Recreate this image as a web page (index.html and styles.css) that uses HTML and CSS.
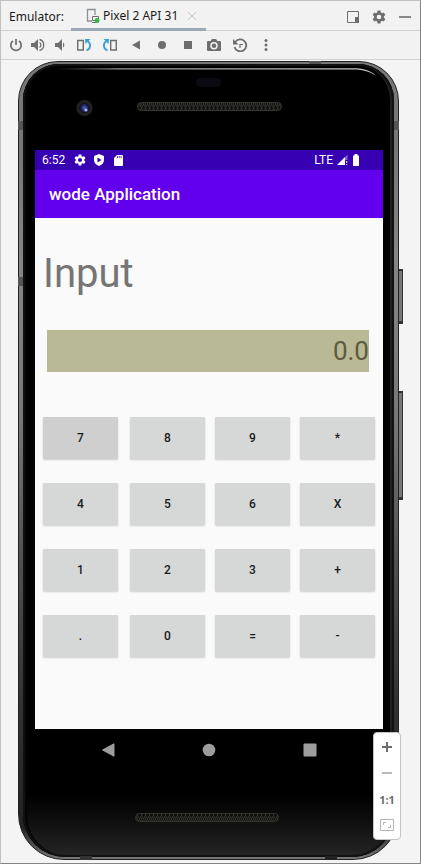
FILE: index.html
```html
<!DOCTYPE html>
<html lang="en">
<head>
<meta charset="utf-8">
<title>Emulator</title>
<meta name="viewport" content="width=device-width">
<link rel="stylesheet" href="styles.css">
</head>
<body>
<header class="titlebar">
  <span class="caption">Emulator:</span>
  <div class="tab">
    <svg width="14" height="16" viewBox="0 0 14 16"><path d="M6 13H1.5V1.5H9V7" fill="none" stroke="#8b9096" stroke-width="1.3"/><path d="M6.5 8.5h6v4h-6zM6 14.5h5" fill="#f2f2f2" stroke="#6e6e6e"/><circle cx="11" cy="12.500" r="2.500" fill="#39b54a"/></svg>
    <span>Pixel 2 API 31</span>
    <button class="icon close" aria-label="Close tab"><svg width="10" height="10" viewBox="0 0 10 10"><path d="M1 1l8 8M9 1L1 9" stroke="#c3c6c8" fill="none"/></svg></button>
  </div>
  <div class="window-actions">
    <button class="icon" aria-label="View mode"><svg width="14" height="14" viewBox="0 0 14 14"><path d="M1.500 1.500h11v11h-11z" fill="none" stroke="#6e6e6e"/><path d="M9 7h4v6H9z" fill="#6e6e6e"/></svg></button>
    <button class="icon" aria-label="Settings"><svg width="14" height="14" viewBox="0 0 24 24"><use href="#gear"/></svg></button>
    <button class="icon" aria-label="Hide"><svg width="12" height="14" viewBox="0 0 12 14"><path d="M0 7h12" stroke="#6e6e6e" stroke-width="1.600"/></svg></button>
  </div>
</header>

<nav class="toolbar" aria-label="Emulator controls">
  <button class="icon small" aria-label="Power"><svg width="14" height="14" viewBox="0 0 14 14"><path d="M4 3a5.200 5.200 0 1 0 6 0M7 1v6" fill="none" stroke="#6e6e6e" stroke-width="1.700"/></svg></button>
  <button class="icon small" aria-label="Volume up"><svg width="14" height="14" viewBox="0 0 14 14"><path d="M0 5h3l4-4v12L3 9H0z" fill="#6e6e6e"/><path d="M8.500 4.500a3 3 0 0 1 0 5M8.500 1.500a5.700 5.700 0 0 1 0 11" fill="none" stroke="#6e6e6e" stroke-width="1.300"/></svg></button>
  <button class="icon small" aria-label="Volume down"><svg width="14" height="14" viewBox="0 0 14 14"><path d="M2 5h3l4-4v12L5 9H2z" fill="#6e6e6e"/><path d="M10 4.500a3 3 0 0 1 0 5z" fill="#6e6e6e"/></svg></button>
  <button class="icon" aria-label="Rotate left"><svg width="16" height="14" viewBox="0 0 16 14"><path d="M1.700 2.500h5.600v9.500H1.700z" fill="none" stroke="#6e6e6e" stroke-width="1.400"/><path d="M10.500 12.500c4.500-1.500 4.500-7 1.500-9" fill="none" stroke="#389fd6" stroke-width="1.800"/><path d="M9 1h5.500L9.500 6z" fill="#389fd6"/></svg></button>
  <button class="icon" aria-label="Rotate right"><svg width="16" height="14" viewBox="0 0 16 14"><path d="M8.700 2.500h5.600v9.500H8.700z" fill="none" stroke="#6e6e6e" stroke-width="1.400"/><path d="M5.500 12.500c-4.500-1.500-4.500-7-1.500-9" fill="none" stroke="#389fd6" stroke-width="1.800"/><path d="M7 1H1.500l5 5z" fill="#389fd6"/></svg></button>
  <button class="icon" aria-label="Back"><svg width="14" height="14" viewBox="0 0 14 14"><path d="M3 7l8-4.500v9z" fill="#6e6e6e"/></svg></button>
  <button class="icon" aria-label="Home"><svg width="14" height="14" viewBox="0 0 14 14"><circle cx="7" cy="7" r="4" fill="#6e6e6e"/></svg></button>
  <button class="icon" aria-label="Overview"><svg width="14" height="14" viewBox="0 0 14 14"><path d="M3 3h8v8H3z" fill="#6e6e6e"/></svg></button>
  <button class="icon" aria-label="Take screenshot"><svg width="14" height="14" viewBox="0 0 14 14"><path d="M1 3h2.500L5 1h4l1.500 2H13q1 0 1 1v8q0 1-1 1H1q-1 0-1-1V4q0-1 1-1z" fill="#6e6e6e"/><circle cx="7" cy="7.800" r="3" fill="none" stroke="#f2f2f2" stroke-width="1.500"/></svg></button>
  <button class="icon" aria-label="Snapshots"><svg width="16" height="14" viewBox="0 0 16 14"><path d="M3 4.500a6 6 0 1 1-.5 4.500" fill="none" stroke="#6e6e6e" stroke-width="1.800"/><path d="M1 1v5.500h5.500z" fill="#6e6e6e"/><path d="M8 10V6.500h3" fill="none" stroke="#6e6e6e" stroke-width="1.200"/></svg></button>
  <button class="icon" aria-label="More"><svg width="14" height="14" viewBox="0 0 14 14" fill="#6e6e6e"><circle cx="7" cy="2.500" r="1.500"/><circle cx="7" cy="7" r="1.500"/><circle cx="7" cy="11.500" r="1.500"/></svg></button>
</nav>

<main class="stage">
  <section class="phone">
    <i class="side power"></i><i class="side volume"></i>
    <i class="seam left-top"></i><i class="seam left-mid"></i><i class="seam right-top"></i><i class="seam top-right"></i><i class="seam bottom-left"></i><i class="seam bottom-right"></i>
    <div class="body">
      <svg class="bezel" viewBox="0 0 348 86" height="86">
        <defs>
          <pattern id="mesh" width="4" height="8" patternUnits="userSpaceOnUse"><path d="M0 0l3 4-3 4M2 0l3 4-3 4" fill="none" stroke="#44443f" stroke-width=".8"/></pattern>
          <radialGradient id="lens"><stop offset="0" stop-color="#5668cc"/><stop offset=".35" stop-color="#202864"/><stop offset=".6" stop-color="#0c0d16"/><stop offset=".65" stop-color="#242424"/><stop offset="1" stop-color="#1b1b1b"/></radialGradient>
          <linearGradient id="shine"><stop offset="0" stop-color="#777" stop-opacity="0"/><stop offset=".2" stop-color="#999"/><stop offset="1" stop-color="#ccc"/></linearGradient>
          <path id="gear" fill-rule="evenodd" fill="#6e6e6e" d="M9.500 1h5l.7 3.300 2 1.200 3.200-1.100 2.500 4.300-2.500 2.200v2.200l2.500 2.200-2.500 4.300-3.200-1.100-2 1.200-.7 3.300h-5l-.7-3.300-2-1.200-3.200 1.100-2.500-4.300 2.500-2.200v-2.200L1.100 8.700l2.500-4.300 3.200 1.100 2-1.200zM12 8a4 4 0 1 0 0 8 4 4 0 0 0 0-8z"/>
        </defs>
        <path d="M20 4.200H322q12 .5 19 7.500-8-5.500-19-6.200H20z" fill="url(#shine)"/>
        <rect x="161" y="14" width="25" height="9" rx="4.500" fill="#0b0a12"/>
        <circle cx="49.500" cy="44" r="8.300" fill="url(#lens)"/><circle cx="51" cy="46" r="1.600" fill="#a8b0f4"/>
        <rect x="102.500" y="38.500" width="144" height="8" rx="4" fill="#11110f"/><rect x="102.500" y="38.500" width="144" height="8" rx="4" fill="url(#mesh)" stroke="#35332e"/>
      </svg>
      <div class="screen">
        <div class="status">
          <span>6:52</span>
          <svg width="12" height="12" viewBox="0 0 24 24"><path fill="#fff" fill-rule="evenodd" d="M9.500 1h5l.7 3.300 2 1.200 3.200-1.100 2.500 4.300-2.500 2.200v2.200l2.500 2.200-2.500 4.300-3.200-1.100-2 1.200-.7 3.300h-5l-.7-3.300-2-1.200-3.200 1.100-2.500-4.300 2.500-2.200v-2.200L1.100 8.700l2.500-4.300 3.200 1.100 2-1.200zM12 8a4 4 0 1 0 0 8 4 4 0 0 0 0-8z"/></svg>
          <svg width="12" height="12" viewBox="0 0 12 12"><path d="M6 0l5 2v4c0 3-2 5-5 6-3-1-5-3-5-6V2z" fill="#fff"/><path d="M4.500 3.500v5L8.500 6z" fill="#3700b3"/></svg>
          <svg width="12" height="12" viewBox="0 0 12 12"><path d="M5 1h5q1 0 1 1v9q0 1-1 1H3q-1 0-1-1V4z" fill="#fff"/><path d="M5.500 2v2M7.300 2v2M9.100 2v2" stroke="#3700b3" stroke-width=".8"/></svg>
          <span class="network">LTE</span>
          <svg width="12" height="12" viewBox="0 0 12 12"><path d="M0 11L8 3v8z" fill="#fff"/><path d="M8 3l2.500-2.500V6H8z" fill="#8466d2"/><path d="M9.700 7v2M9.700 10v1" stroke="#cfc0f0" stroke-width="1.300"/></svg>
          <svg class="battery" width="8" height="12" viewBox="0 0 8 12"><path d="M2.500 0h3v1.500H7V12H1V1.500h1.500z" fill="#fff"/></svg>
        </div>
        <h1 class="appbar">wode Application</h1>
        <form class="calculator">
          <label for="result">Input</label>
          <input id="result" type="text" value="0.0" readonly>
          <div class="keys">
            <button type="button" class="focused">7</button><button type="button">8</button><button type="button">9</button><button type="button">*</button>
            <button type="button">4</button><button type="button">5</button><button type="button">6</button><button type="button">X</button>
            <button type="button">1</button><button type="button">2</button><button type="button">3</button><button type="button">+</button>
            <button type="button">.</button><button type="button">0</button><button type="button">=</button><button type="button">-</button>
          </div>
        </form>
      </div>
      <div class="system-nav">
        <button class="icon" aria-label="Android back"><svg width="14" height="14" viewBox="0 0 14 14"><path d="M1.500 7L13 .8v12.400z" fill="#9d9d9d" stroke="#9d9d9d" stroke-linejoin="round"/></svg></button>
        <button class="icon" aria-label="Android home"><svg width="14" height="14" viewBox="0 0 14 14"><circle cx="7" cy="7" r="6.300" fill="#9d9d9d"/></svg></button>
        <button class="icon" aria-label="Android overview"><svg width="14" height="14" viewBox="0 0 14 14"><rect x=".5" y=".5" width="13" height="13" rx="1" fill="#9d9d9d"/></svg></button>
      </div>
      <svg class="bezel" viewBox="0 0 348 86" height="86"><rect x="100.500" y="42.500" width="143" height="8" rx="4" fill="#0d0d0b"/><rect x="100.500" y="42.500" width="143" height="8" rx="4" fill="url(#mesh)" stroke="#35332e"/></svg>
    </div>
  </section>
  <aside class="zoom">
    <button class="icon" aria-label="Zoom in"><svg width="14" height="14" viewBox="0 0 14 14"><path d="M2 7h10M7 2v10" stroke="#6e6e6e" stroke-width="2"/></svg></button>
    <button class="icon" aria-label="Zoom out"><svg width="14" height="14" viewBox="0 0 14 14"><path d="M2 7h10" stroke="#b9b9b9" stroke-width="2"/></svg></button>
    <button class="icon ratio">1:1</button>
    <button class="icon" aria-label="Zoom to fit"><svg width="14" height="12" viewBox="0 0 14 12" fill="none" stroke="#b5b5b5"><path d="M.5.5h13v11H.5z"/><path d="M3.500 6V3.500H6M10.500 6v2.500H8"/></svg></button>
  </aside>
</main>
</body>
</html>
```
FILE: styles.css
```css
* { box-sizing: border-box; }

body {
  margin: 0;
  min-height: 100vh;
  display: flex;
  flex-direction: column;
  border: 1px solid #c1c1c1;
  border-right-color: #858585;
  border-bottom-color: #858585;
  background: #f2f2f2;
  font-family: "Noto Sans", sans-serif;
  color: #1a1a1a;
}

button, input { font: inherit; color: inherit; margin: 0; }
svg { display: block; flex: none; }

.icon {
  display: flex;
  align-items: center;
  justify-content: center;
  width: 26px;
  height: 26px;
  padding: 0;
  border: 0;
  background: none;
}

.titlebar {
  display: flex;
  height: 30px;
  padding-left: 8px;
  border-bottom: 1px solid #d1d1d1;
  font-size: 12px;
  line-height: 32px;
}
.caption { width: 62px; white-space: nowrap; }
.tab {
  display: flex;
  align-items: center;
  height: 30px;
  padding: 3px 4px 0 15px;
  border-bottom: 3px solid #9ca7b8;
  white-space: nowrap;
}
.tab span { margin: 0 1px 0 3px; width: 78px; }
.close { width: 20px; }
.window-actions { display: flex; align-items: center; margin: 3px 2px 0 auto; }

.toolbar {
  display: flex;
  align-items: center;
  height: 29px;
  padding-left: 4px;
  border-bottom: 1px solid #d1d1d1;
}
.toolbar .small { width: 22px; }

.stage {
  position: relative;
  flex: 1;
  display: flex;
  background: #f4f4f4;
  padding: 1px 21px 3px 17px;
}

.phone {
  position: relative;
  flex: 1;
  min-width: 0;
  display: flex;
  padding: 2px 4px;
  border: 1px solid #222;
  border-radius: 40px 40px 46px 46px;
  background: linear-gradient(#777, #777 12%, #858585 25%, #777 45%, #555 60%, #333 80%, #222 96%, #777);
}
.body {
  flex: 1;
  min-width: 0;
  display: flex;
  flex-direction: column;
  padding: 0 11px 0 12px;
  border-radius: 36px 36px 42px 42px;
  background: linear-gradient(#000 92%, #080808 94%, #252525);
  box-shadow: inset 0 0 0 2px #111, inset 3px 0 0 1px #050505, inset -4px 0 0 #202020;
}
.bezel { width: 100%; }

.side {
  position: absolute;
  right: -5px;
  width: 4px;
  border: solid #333;
  border-width: 2px 1px 3px 0;
  background: #777;
}
.power { top: 207px; height: 55px; }
.volume { top: 329px; height: 109px; }

.seam { position: absolute; background: #555; width: 5px; height: 9px; }
.left-top { left: -1px; top: 59px; }
.left-mid { left: -1px; top: 215px; }
.right-top { right: -1px; top: 59px; }
.top-right { right: 77px; top: -1px; width: 12px; height: 3px; }
.bottom-left { left: 61px; bottom: -1px; width: 12px; height: 4px; background: #333; }
.bottom-right { right: 61px; bottom: -1px; width: 12px; height: 4px; background: #222; }

.screen {
  flex: 1;
  display: flex;
  flex-direction: column;
  background: #fafafa;
  font-family: Roboto, sans-serif;
}
.status {
  display: flex;
  align-items: center;
  gap: 7px;
  height: 20px;
  padding: 0 23px 0 7px;
  background: #3700b3;
  color: #fff;
  font-size: 12px;
}
.status span { margin-right: 2px; }
.status .network { margin: 0 -3px 0 auto; }
.battery { margin-left: -4px; }
.appbar {
  margin: 0;
  padding-left: 14px;
  background: #6200ee;
  color: #fff;
  font-size: 17px;
  font-weight: 500;
  line-height: 48px;
  height: 48px;
}

.calculator {
  display: flex;
  flex-direction: column;
  padding: 32px 8px 0;
  color: #757575;
}
.calculator label { font-size: 40px; line-height: 48px; }
.calculator input {
  margin: 32px 6px 45px 4px;
  height: 42px;
  min-width: 0;
  padding: 0;
  border: 0;
  border-radius: 0;
  background: #bab995;
  color: #5c5b3e;
  font-size: 26px;
  text-align: right;
}
.keys {
  display: grid;
  grid-template-columns: 77fr 75fr 75fr 75fr;
  gap: 24px 10px;
}
.keys button {
  height: 42px;
  padding: 0;
  border: 0;
  border-radius: 1px;
  background: #d6d8d7;
  box-shadow: 0 1px 2px #ccc;
  color: #1a1a1a;
  font-size: 12px;
  font-weight: 500;
}
.keys button:nth-child(4n+1) { margin-right: 2px; }
.keys .focused { background: #cfcfcf; }

.system-nav {
  display: flex;
  justify-content: center;
  gap: 75px;
  height: 42px;
  padding-top: 8px;
}

.zoom {
  position: absolute;
  right: 19px;
  bottom: 23px;
  width: 28px;
  padding: 1px 0;
  border: 1px solid #c4c4c4;
  border-radius: 4px;
  background: #fff;
}
.ratio {
  color: #6e6e6e;
  font-size: 11px;
  font-weight: 700;
}
```
